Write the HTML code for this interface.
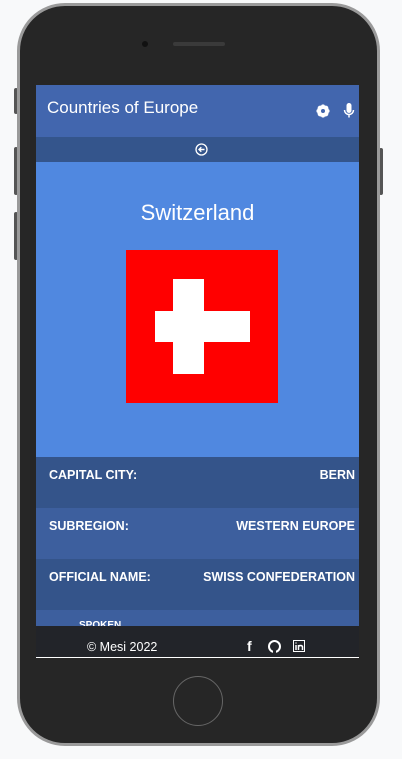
<!DOCTYPE html>
<html><head><style>
*{margin:0;padding:0;box-sizing:border-box}
body{width:402px;height:759px;background:#f8f9fa;position:relative;overflow:hidden;font-family:"Liberation Sans",sans-serif}
.btn{position:absolute;background:#555;border-radius:2px;width:4px}
.phone{position:absolute;left:17px;top:3px;width:363px;height:743px;background:#262626;border:3px solid #9a9a9a;border-radius:48px}
.screen{position:absolute;left:36px;top:85px;width:323px;height:573px;overflow:hidden;background:#5088e0}
.hdr{height:52px;background:#4266ae;color:#fff;position:relative}
.hdr .t{position:absolute;left:11px;top:13px;font-size:17px}
.sub{height:25px;background:#34558c;position:relative}
.row{height:51px;display:flex;justify-content:space-between;padding:11px 4px 0 13px;color:#fff;font-weight:bold;font-size:12.5px}
.foot{position:absolute;left:0;top:541px;width:323px;height:32px;background:#222429;color:#fff;font-size:12.5px;border-bottom:1px solid #fff}
</style></head><body>
<div class="btn" style="left:14px;top:88px;height:26px"></div>
<div class="btn" style="left:14px;top:147px;height:48px"></div>
<div class="btn" style="left:14px;top:212px;height:48px"></div>
<div class="btn" style="left:379px;top:148px;height:47px"></div>
<div class="phone"></div>
<div style="position:absolute;left:142px;top:41px;width:6px;height:6px;border-radius:50%;background:#111"></div>
<div style="position:absolute;left:173px;top:42px;width:52px;height:4px;border-radius:2px;background:#3a3a3a"></div>
<div style="position:absolute;left:173px;top:676px;width:50px;height:50px;border-radius:50%;border:1.5px solid #666"></div>
<div class="screen">
 <div class="hdr"><div class="t">Countries of Europe</div>
  <svg style="position:absolute;left:280px;top:19px" width="14" height="14" viewBox="0 0 14 14"><circle cx="7" cy="7" r="4.5" fill="none" stroke="#fff" stroke-width="3"/><g stroke="#fff" stroke-width="2.5"><line x1="7" y1="0.5" x2="7" y2="13.5"/><line x1="0.5" y1="7" x2="13.5" y2="7"/><line x1="2.4" y1="2.4" x2="11.6" y2="11.6"/><line x1="11.6" y1="2.4" x2="2.4" y2="11.6"/></g><circle cx="7" cy="7" r="2" fill="#4266ae"/></svg>
  <svg style="position:absolute;left:307px;top:18px" width="12" height="16" viewBox="0 0 12 16"><rect x="3.5" y="0" width="5" height="10" rx="2.5" fill="#fff"/><path d="M1.5 7a4.5 4.5 0 0 0 9 0M6 11.5v3" stroke="#fff" stroke-width="1.5" fill="none"/></svg>
 </div>
 <div class="sub"><svg style="position:absolute;left:159px;top:6px" width="13" height="13" viewBox="0 0 13 13"><circle cx="6.5" cy="6.5" r="5.5" fill="none" stroke="#fff" stroke-width="1.3"/><path d="M9.5 6.5H4M6.3 4.2L4 6.5l2.3 2.3" stroke="#fff" stroke-width="1.4" fill="none"/></svg></div>
 <div style="height:295px;position:relative">
  <div style="position:absolute;top:38px;width:100%;text-align:center;color:#fff;font-size:22px">Switzerland</div>
  <div style="position:absolute;left:90px;top:88px;width:152px;height:153px;background:#ff0000">
   <div style="position:absolute;left:47px;top:29px;width:31px;height:95px;background:#fff"></div>
   <div style="position:absolute;left:29px;top:61px;width:95px;height:31px;background:#fff"></div>
  </div>
 </div>
 <div class="row" style="background:#34548a"><span>CAPITAL CITY:</span><span>BERN</span></div>
 <div class="row" style="background:#3d5f9e"><span>SUBREGION:</span><span>WESTERN EUROPE</span></div>
 <div class="row" style="background:#34548a"><span>OFFICIAL NAME:</span><span>SWISS CONFEDERATION</span></div>
 <div class="row" style="background:#3d5f9e;position:relative"><span style="position:absolute;left:43px;top:10px;font-size:10px">SPOKEN</span></div>
 <div class="foot"><span style="position:absolute;left:51px;top:14px">© Mesi 2022</span>
  <span style="position:absolute;left:211px;top:12px;font-weight:bold;font-size:14px">f</span>
  <svg style="position:absolute;left:232px;top:14px" width="13" height="13" viewBox="0 0 13 13"><circle cx="6.5" cy="6.5" r="5.5" fill="none" stroke="#fff" stroke-width="2"/><rect x="5" y="9" width="3" height="4" fill="#222429"/></svg>
  <svg style="position:absolute;left:257px;top:14px" width="12" height="12" viewBox="0 0 12 12"><rect x="0.5" y="0.5" width="11" height="11" fill="none" stroke="#fff"/><path d="M3 5v5M3 2.5v1M5.5 10V5M5.5 7c0-2 4-2 4 0v3" stroke="#fff" stroke-width="1.5" fill="none"/></svg>
 </div>
</div>
</body></html>
